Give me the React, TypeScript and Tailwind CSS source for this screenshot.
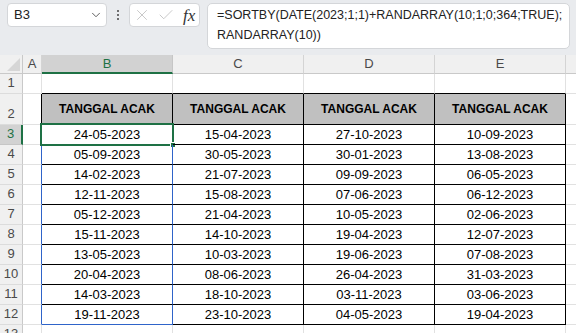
import { ChevronDown, X, Check } from "lucide-react";

const cols: string[][] = [
  ["24-05-2023", "05-09-2023", "14-02-2023", "12-11-2023", "05-12-2023", "15-11-2023", "13-05-2023", "20-04-2023", "14-03-2023", "19-11-2023"],
  ["15-04-2023", "30-05-2023", "21-07-2023", "15-08-2023", "21-04-2023", "14-10-2023", "10-03-2023", "08-06-2023", "18-10-2023", "23-10-2023"],
  ["27-10-2023", "30-01-2023", "09-09-2023", "07-06-2023", "10-05-2023", "19-04-2023", "19-06-2023", "26-04-2023", "03-11-2023", "04-05-2023"],
  ["10-09-2023", "13-08-2023", "06-05-2023", "06-12-2023", "02-06-2023", "12-07-2023", "07-08-2023", "31-03-2023", "03-06-2023", "19-04-2023"],
];

const font = { fontFamily: '"Liberation Sans", Arial, sans-serif' };

function RowHead({ n, active }: { n: number; active?: boolean }) {
  return (
    <div
      className={
        "flex items-end justify-center pb-[1px] text-[13px] " +
        (active
          ? "bg-[#d2d2d2] border-r-2 border-r-[#1e7145] border-b border-b-[#c6c6c6] text-[#1e7145]"
          : "bg-[#f0f0f0] border-r border-r-[#c9c9c9] border-b border-b-[#dcdcdc] text-[#4a4a4a]")
      }
    >
      {n}
    </div>
  );
}

export default function App() {
  return (
    <div className="w-[576px] h-[333px] overflow-hidden bg-white" style={font}>
      {/* formula bar area */}
      <div className="h-[55px] bg-[#e9ebee] flex items-start">
        <div className="ml-[7px] mt-[3px] w-[100px] h-[24px] bg-white rounded-[4px] border border-[#d4d6d9] flex items-center justify-between pl-[6px] pr-[3px]">
          <span className="text-[13px] text-[#222]">B3</span>
          <ChevronDown className="w-[14px] h-[14px] text-[#555]" strokeWidth={1.6} />
        </div>
        <div className="w-[22px] mt-[3px] h-[24px] flex flex-col items-center justify-center gap-[2px]">
          <span className="w-[2px] h-[2px] bg-[#444] rounded-full" />
          <span className="w-[2px] h-[2px] bg-[#444] rounded-full" />
          <span className="w-[2px] h-[2px] bg-[#444] rounded-full" />
        </div>
        <div className="mt-[3px] w-[71px] h-[24px] bg-white rounded-[4px] border border-[#d4d6d9] flex items-center pl-[3px] gap-[6px]">
          <X className="w-[18px] h-[18px] text-[#bdbdbd]" strokeWidth={1.1} />
          <Check className="w-[18px] h-[18px] text-[#bdbdbd]" strokeWidth={1.1} />
          <span className="ml-[2px] text-[17px] italic text-[#333] leading-none" style={{ fontFamily: '"Liberation Serif", serif' }}>
            fx
          </span>
        </div>
        <div className="ml-[7px] mt-[3px] w-[363px] h-[46px] bg-white rounded-[5px] border border-[#d4d6d9] pl-[9px] pt-[1px] text-[12.5px] leading-[20px] text-[#222]">
          <div>=SORTBY(DATE(2023;1;1)+RANDARRAY(10;1;0;364;TRUE);</div>
          <div>RANDARRAY(10))</div>
        </div>
      </div>

      {/* sheet grid */}
      <div className="grid grid-cols-[23px_19px_131px_131px_131px_131px_1fr] grid-rows-[19px_20px_31px_repeat(11,20px)]">
        {/* column headers */}
        <div className="bg-[#f0f0f0] border-r border-r-[#c9c9c9] border-b border-b-[#c9c9c9] flex items-end justify-end p-[2px]">
          <div className="w-0 h-0 border-l-[13px] border-l-transparent border-b-[13px] border-b-[#d6d6d6]" />
        </div>
        <div className="bg-[#f0f0f0] border-r border-r-[#d4d4d4] border-b border-b-[#c9c9c9] flex items-center justify-center text-[13px] text-[#4a4a4a]">A</div>
        <div className="bg-[#d2d2d2] border-r border-r-[#c6c6c6] border-b-2 border-b-[#1e7145] flex items-center justify-center text-[13px] text-[#1e7145]">B</div>
        {["C", "D", "E"].map((c) => (
          <div key={c} className="bg-[#f0f0f0] border-r border-r-[#d4d4d4] border-b border-b-[#c9c9c9] flex items-center justify-center text-[13px] text-[#4a4a4a]">
            {c}
          </div>
        ))}
        <div className="bg-[#f0f0f0] border-b border-b-[#c9c9c9]" />

        {/* row 1 */}
        <RowHead n={1} />
        <div className="border-r border-r-[#e1e1e1] border-b border-b-[#e1e1e1]" />
        {[0, 1, 2, 3].map((i) => (
          <div key={i} className="border-r border-r-[#e1e1e1] border-b border-b-black" />
        ))}
        <div className="border-b border-b-[#e1e1e1]" />

        {/* row 2 - table header */}
        <RowHead n={2} />
        <div className="border-r border-r-black border-b border-b-[#e1e1e1]" />
        {[0, 1, 2, 3].map((i) => (
          <div key={i} className="bg-[#c0c0c0] border-r border-r-black border-b border-b-black flex items-center justify-center text-[12px] font-bold text-black">
            TANGGAL ACAK
          </div>
        ))}
        <div className="border-b border-b-[#e1e1e1]" />

        {/* rows 3-12 */}
        {cols[0].map((_, r) => (
          <div key={r} className="contents">
            <RowHead n={r + 3} active={r === 0} />
            <div className="border-r border-r-[#2f64c9] border-b border-b-[#e1e1e1]" />
            {cols.map((col, ci) => (
              <div
                key={ci}
                className={
                  "relative flex items-center justify-center text-[13px] text-black " +
                  (ci === 0
                    ? "border-r border-r-[#2f64c9] border-b " + (r === 9 ? "border-b-[#2f64c9]" : "border-b-black")
                    : "border-r border-r-black border-b border-b-black")
                }
              >
                {col[r]}
                {ci === 0 && r === 0 && (
                  <div className="absolute -left-[2px] -top-[2px] w-[134px] h-[23px] border-2 border-[#1e7145]">
                    <div className="absolute -right-[4px] -bottom-[4px] w-[6px] h-[6px] bg-[#1e7145] border border-white" />
                  </div>
                )}
              </div>
            ))}
            <div className="border-b border-b-[#e1e1e1]" />
          </div>
        ))}

        {/* row 13 partial */}
        <RowHead n={13} />
        <div className="border-r border-r-[#e1e1e1]" />
        {[0, 1, 2, 3].map((i) => (
          <div key={i} className="border-r border-r-[#e1e1e1]" />
        ))}
        <div />
      </div>
    </div>
  );
}
